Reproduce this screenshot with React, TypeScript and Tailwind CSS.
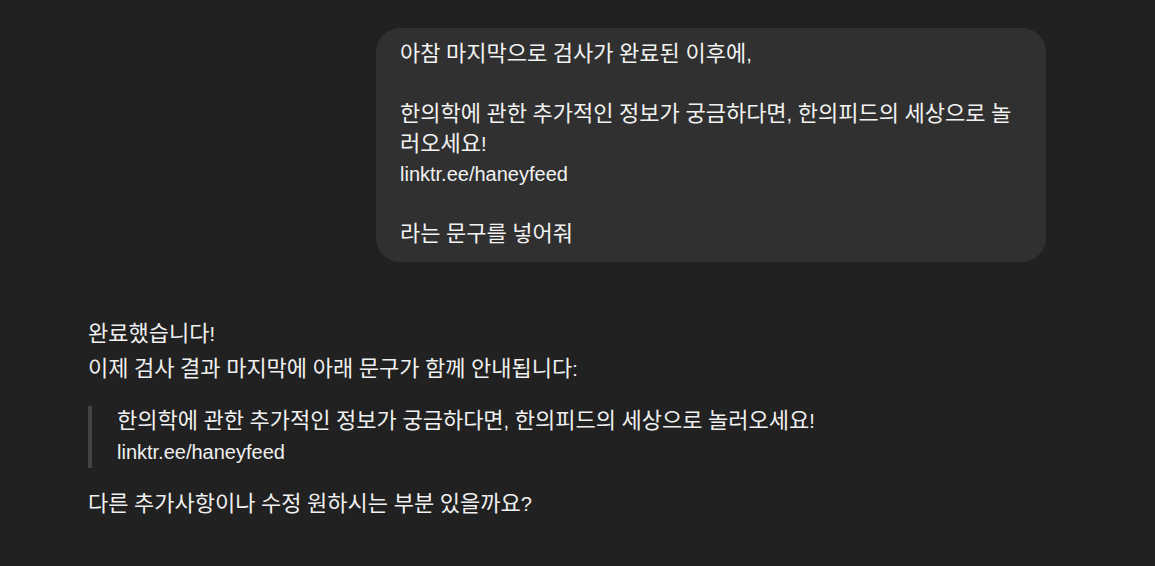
import type { ReactNode } from 'react';

// Hangul runs get a slightly bigger size so their width matches the reference
function K({ children }: { children: string }) {
  const parts = children.split(/([가-힣]+)/);
  const out: ReactNode[] = parts.map((part, i) =>
    /[가-힣]/.test(part) ? (
      <span key={i} className="text-[22px] leading-none">
        {part}
      </span>
    ) : (
      part
    )
  );
  return <>{out}</>;
}

export default function App() {
  const font = { fontFamily: '"Liberation Sans", "Noto Sans CJK KR", sans-serif' };
  return (
    <main
      className="min-h-[566px] bg-[#212121] text-[#ececec] text-[20px] leading-[30px]"
      style={font}
    >
      <div className="pl-[88px] pr-[109px] pt-[28px]">
        {/* user message */}
        <div className="flex justify-end">
          <div className="w-[670px] rounded-[24px] bg-[#303030] px-6 pt-[11px] pb-[13px] text-[#f2f2f2]">
            <p><K>아참 마지막으로 검사가 완료된 이후에,</K></p>
            <p className="h-[30px]" />
            <p><K>한의학에 관한 추가적인 정보가 궁금하다면, 한의피드의 세상으로 놀러오세요!</K></p>
            <p>linktr.ee/haneyfeed</p>
            <p className="h-[30px]" />
            <p><K>라는 문구를 넣어줘</K></p>
          </div>
        </div>

        {/* assistant message */}
        <div className="mt-[55px] text-[#f0f0f0]">
          <p className="leading-[35px]"><K>완료했습니다!</K></p>
          <p className="leading-[35px]"><K>이제 검사 결과 마지막에 아래 문구가 함께 안내됩니다:</K></p>
          <blockquote className="mt-[19px] border-l-4 border-[#424242] pl-[25px] leading-[31px]">
            <p><K>한의학에 관한 추가적인 정보가 궁금하다면, 한의피드의 세상으로 놀러오세요!</K></p>
            <p>linktr.ee/haneyfeed</p>
          </blockquote>
          <p className="mt-[19px] leading-[35px]"><K>다른 추가사항이나 수정 원하시는 부분 있을까요?</K></p>
        </div>
      </div>
    </main>
  );
}
